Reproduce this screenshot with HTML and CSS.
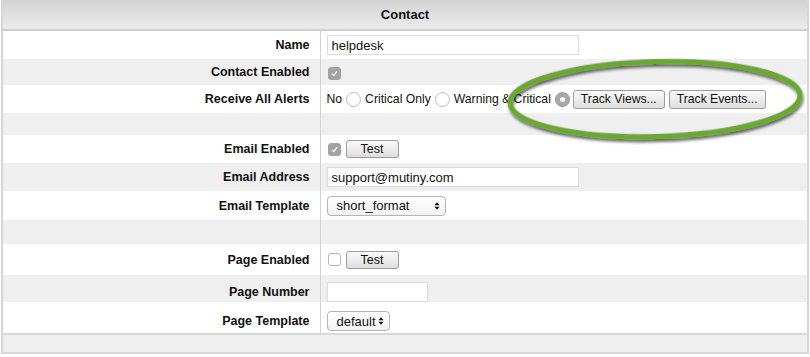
FILE: index.html
```html
<!DOCTYPE html>
<html>
<head>
<meta charset="utf-8">
<link rel="stylesheet" href="styles.css">
</head>
<body>
<div class="panel">
  <table class="form">
    <thead>
      <tr class="head"><th colspan="2">Contact</th></tr>
    </thead>
    <tbody>
      <tr class="r-name"><td class="lbl">Name</td><td class="val"><span class="input wide">helpdesk</span></td></tr>
      <tr class="alt r-ce"><td class="lbl">Contact Enabled</td><td class="val"><span class="cb checked disabled"><svg viewBox="0 0 13 13"><path d="M3.5 6.8 L5.6 9 L9.6 3.8" fill="none" stroke="#fff" stroke-width="1.4"/></svg></span></td></tr>
      <tr class="r-alerts"><td class="lbl">Receive All Alerts</td><td class="val">
        <span class="opts">
          <span class="opt">No<span class="radio"></span></span>
          <span class="opt">Critical Only<span class="radio"></span></span>
          <span class="opt">Warning &amp; Critical<span class="radio on"><span class="dot"></span></span></span>
          <span class="btn">Track Views...</span>
          <span class="btn">Track Events...</span>
        </span>
      </td></tr>
      <tr class="alt r-sp1"><td class="lbl"></td><td class="val"></td></tr>
      <tr class="r-ee"><td class="lbl">Email Enabled</td><td class="val"><span class="row-inline"><span class="cb checked disabled"><svg viewBox="0 0 13 13"><path d="M3.5 6.8 L5.6 9 L9.6 3.8" fill="none" stroke="#fff" stroke-width="1.4"/></svg></span><span class="btn test">Test</span></span></td></tr>
      <tr class="alt r-ea"><td class="lbl">Email Address</td><td class="val"><span class="input wide">support@mutiny.com</span></td></tr>
      <tr class="r-et"><td class="lbl">Email Template</td><td class="val"><span class="select sel-long">short_format<span class="arrows"><svg viewBox="0 0 7 11"><path d="M3.5 1 L6.5 4.5 L0.5 4.5 Z M3.5 10 L6.5 6.5 L0.5 6.5 Z" fill="#111"/></svg></span></span></td></tr>
      <tr class="alt r-sp2"><td class="lbl"></td><td class="val"></td></tr>
      <tr class="r-pe"><td class="lbl">Page Enabled</td><td class="val"><span class="row-inline"><span class="cb"></span><span class="btn test">Test</span></span></td></tr>
      <tr class="alt r-pn"><td class="lbl">Page Number</td><td class="val"><span class="input short"></span></td></tr>
      <tr class="r-pt"><td class="lbl">Page Template</td><td class="val"><span class="select sel-short">default<span class="arrows"><svg viewBox="0 0 7 11"><path d="M3.5 1 L6.5 4.5 L0.5 4.5 Z M3.5 10 L6.5 6.5 L0.5 6.5 Z" fill="#111"/></svg></span></span></td></tr>
    </tbody>
    <tfoot>
      <tr class="foot"><td colspan="2"></td></tr>
    </tfoot>
  </table>
  <svg class="ring" viewBox="0 0 310 95" width="310" height="95">
    <defs>
      <filter id="sh" x="-10%" y="-20%" width="120%" height="150%">
        <feGaussianBlur in="SourceAlpha" stdDeviation="1.5"/>
        <feOffset dx="1" dy="3" result="b"/>
        <feComponentTransfer><feFuncA type="linear" slope="0.6"/></feComponentTransfer>
        <feMerge><feMergeNode/><feMergeNode in="SourceGraphic"/></feMerge>
      </filter>
    </defs>
    <ellipse cx="152" cy="43" rx="145" ry="37.5" fill="none" stroke="#6aa832" stroke-width="5" transform="rotate(-1.5 152 43)" filter="url(#sh)"/>
  </svg>
</div>
</body>
</html>
```

FILE: styles.css
```css
* { box-sizing: border-box; }
html, body { margin: 0; padding: 0; background: #fff; }
body {
  width: 810px;
  height: 357px;
  overflow: hidden;
  font-family: "Liberation Sans", Arial, Helvetica, sans-serif;
  font-size: 13px;
  color: #111;
}
.panel {
  position: relative;
  width: 808px;
  margin-left: 1px;
}
.form {
  width: 100%;
  border-collapse: collapse;
  border-left: 2px solid #d6d6d6;
  border-right: 2px solid #d6d6d6;
}
.head th {
  height: 30px;
  font-weight: bold;
  font-size: 13px;
  text-align: center;
  background: linear-gradient(#d3d3d3, #ebebeb);
  border-bottom: 2px solid #cfcfcf;
  padding: 0;
}
td { padding: 0; }
.lbl {
  width: 318px;
  text-align: right;
  font-weight: bold;
  font-size: 12.5px;
  padding-right: 10px;
  border-right: 1px solid #d2d2d2;
}
.val { padding-left: 6px; }
.alt td { background: #efefef; }
.r-name { height: 29px; }
.r-ce { height: 26px; }
.r-alerts { height: 28px; }
.r-sp1 { height: 22px; }
.r-ee { height: 28px; }
.r-ea { height: 28px; }
.r-et { height: 29px; }
.r-sp2 { height: 24px; }
.r-pe { height: 31px; }
.r-pn { height: 27px; }
.r-pt { height: 32px; }
.r-pn td, .r-pt td { padding-top: 7px; }
.foot td {
  height: 19px;
  background: #efefef;
  border-top: 2px solid #d8d8d8;
  border-bottom: 2px solid #d8d8d8;
}
.input {
  display: flex;
  align-items: center;
  height: 20px;
  background: #fff;
  border: 1px solid #dcdcdc;
  padding-left: 4px;
  font-size: 13px;
}
.input.wide { width: 252px; }
.input.short { width: 101px; }
.cb {
  display: inline-block;
  width: 13px;
  height: 13px;
  border: 1px solid #b8b8b8;
  border-radius: 3px;
  background: #fff;
  vertical-align: middle;
  margin-left: 1px;
}
.cb svg { display: block; width: 11px; height: 11px; }
.cb.checked.disabled { background: #a3a3a3; border-color: #a3a3a3; }
.opts { display: flex; align-items: center; font-size: 12.2px; }
.opt { display: inline-flex; align-items: center; margin-right: 4px; }
.radio {
  display: inline-block;
  width: 15px;
  height: 15px;
  border-radius: 50%;
  border: 1px solid #bdbdbd;
  background: #fff;
  margin-left: 4px;
}
.radio.on {
  background: #a9a9a9;
  border-color: #999;
  display: inline-flex;
  align-items: center;
  justify-content: center;
}
.radio .dot { width: 5px; height: 5px; border-radius: 50%; background: #fff; }
.btn {
  display: inline-flex;
  align-items: center;
  justify-content: center;
  height: 19px;
  padding: 0 6px;
  border: 1px solid #9c9c9c;
  border-radius: 3px;
  background: linear-gradient(#fafafa, #dedede);
  font-size: 12.5px;
  white-space: nowrap;
}
.opts .btn { font-size: 12.2px; padding: 0 7px; }
.opts .opt:nth-child(3) { margin-right: 3px; }
.opts .btn + .btn { margin-left: 4px; }
.row-inline { display: flex; align-items: center; }
.btn.test { width: 53px; margin-left: 5px; height: 18px; }
.select {
  display: inline-flex;
  align-items: center;
  justify-content: space-between;
  height: 20px;
  border: 1px solid #b5b5b5;
  border-radius: 4px;
  background: linear-gradient(#fff, #f2f2f2);
  padding: 0 5px 0 9px;
  font-size: 13px;
}
.select.sel-long { width: 119px; }
.select.sel-short { width: 63px; }
.arrows svg { display: block; width: 6px; height: 10px; }
.ring {
  position: absolute;
  left: 502px;
  top: 56px;
  pointer-events: none;
}
```
